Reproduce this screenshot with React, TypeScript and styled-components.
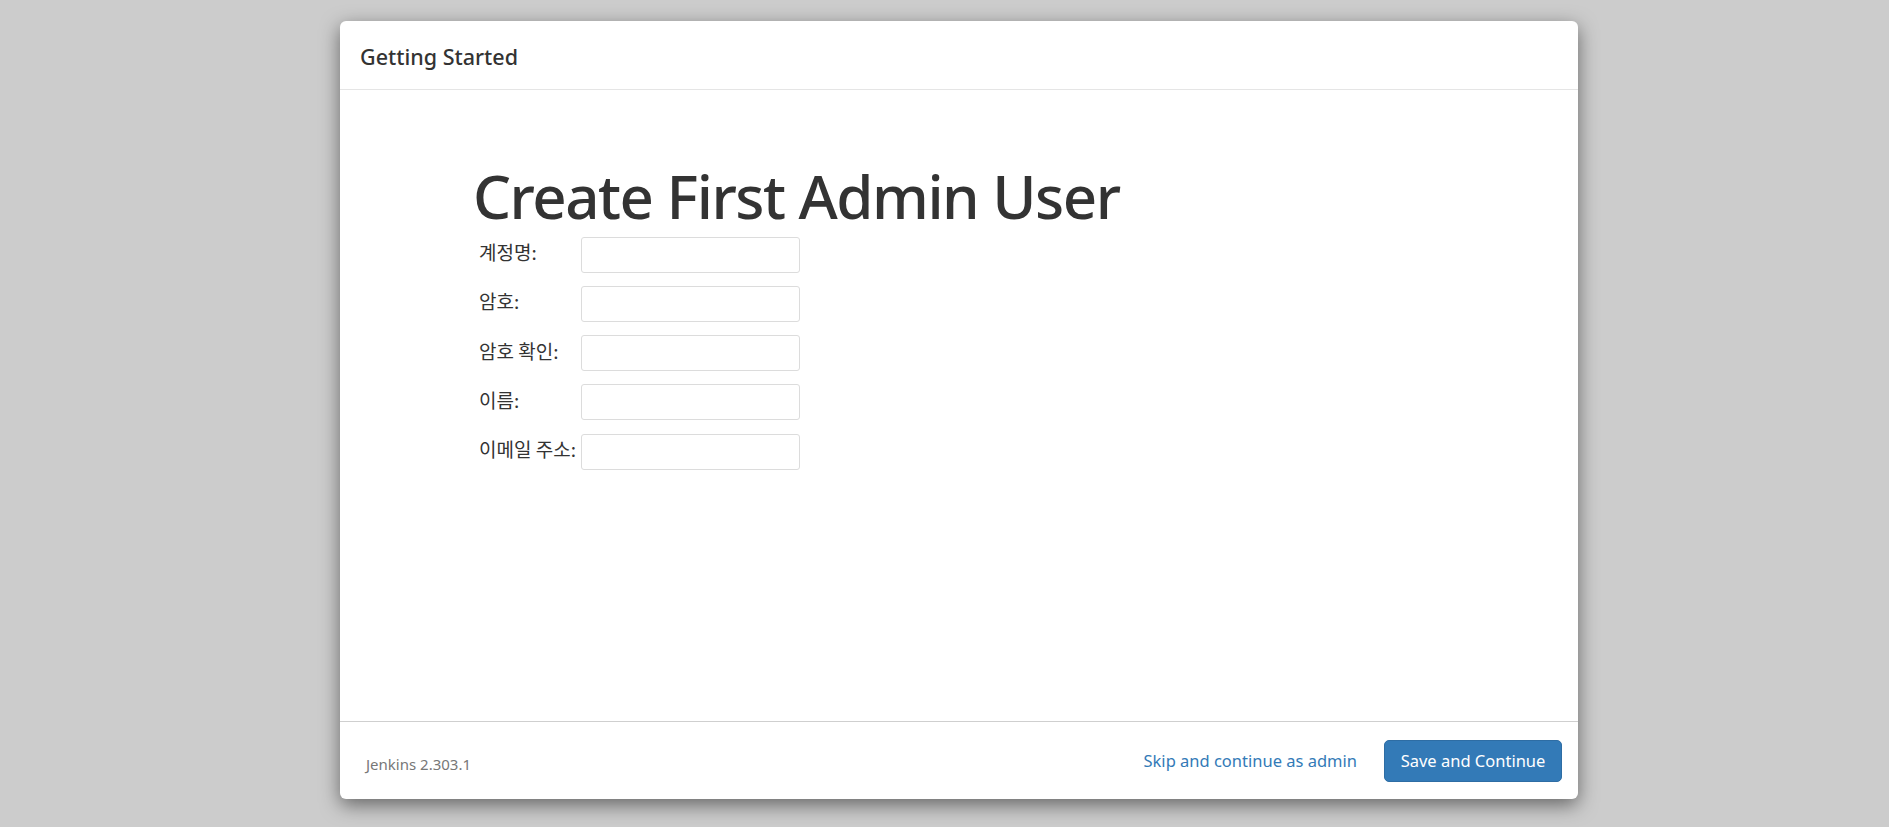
import React from 'react';
import styled, { createGlobalStyle } from 'styled-components';

const GlobalStyle = createGlobalStyle`
  body {
    margin: 0;
    background: #cccccc;
    font-family: "Noto Sans", "Noto Sans CJK KR", sans-serif;
    color: #333333;
  }
`;

const Page = styled.div`
  min-height: 827px;
  padding: 21px 0 0 340px;
  box-sizing: border-box;
`;

const Dialog = styled.div`
  width: 1238px;
  height: 778px;
  background: #ffffff;
  border-radius: 6px;
  box-shadow: 0 6px 19px rgba(0, 0, 0, 0.5);
  display: flex;
  flex-direction: column;
  overflow: hidden;
`;

const Header = styled.div`
  height: 69px;
  box-sizing: border-box;
  border-bottom: 1px solid #e5e5e5;
  display: flex;
  align-items: center;
  padding: 3px 20px 0;
`;

const Title = styled.h4`
  margin: 0;
  font-size: 21.5px;
  font-weight: 500;
  line-height: 1.1;
  color: #333333;
`;

const Body = styled.div`
  flex: 1;
  padding: 73px 0 0 133px;
`;

const Heading = styled.h1`
  margin: 0;
  font-size: 60px;
  font-weight: 500;
  line-height: 66px;
  color: #333333;
  letter-spacing: -1.5px;
`;

const Form = styled.table`
  border-collapse: collapse;
  margin: 1px 0 0 6px;
`;

const Label = styled.td`
  font-family: "Noto Sans CJK KR", sans-serif;
  font-size: 19px;
  padding: 0 5px 6px 0;
  vertical-align: middle;
  height: 49.25px;
  box-sizing: border-box;
  white-space: nowrap;
  color: #333333;
`;

const Cell = styled.td`
  padding: 0;
  vertical-align: middle;
`;

const Field = styled.input`
  width: 219px;
  height: 36px;
  box-sizing: border-box;
  border: 1px solid #dcdcdc;
  border-radius: 3px;
  outline: none;
  padding: 0 8px;
  font-size: 17px;
  display: block;
`;

const Footer = styled.div`
  height: 78px;
  box-sizing: border-box;
  border-top: 1px solid #cfcfcf;
  display: flex;
  align-items: center;
  padding: 0 16px 0 26px;
`;

const Version = styled.span`
  font-size: 15px;
  color: #777777;
  flex: 1;
  padding-top: 6px;
`;

const SkipLink = styled.a`
  font-size: 16.5px;
  color: #337ab7;
  text-decoration: none;
  margin-right: 27px;
  cursor: pointer;
`;

const PrimaryButton = styled.button`
  height: 42px;
  width: 178px;
  background: #337ab7;
  border: 1px solid #2e6da4;
  border-radius: 5px;
  color: #ffffff;
  font-family: "Noto Sans", sans-serif;
  font-size: 16.5px;
  cursor: pointer;
`;

const fields = ['계정명:', '암호:', '암호 확인:', '이름:', '이메일 주소:'];

const App = () => {
  return (
    <>
      <GlobalStyle />
      <Page>
        <Dialog>
          <Header>
            <Title>Getting Started</Title>
          </Header>
          <Body>
            <Heading>Create First Admin User</Heading>
            <Form>
              <tbody>
                {fields.map((label) => (
                  <tr key={label}>
                    <Label>{label}</Label>
                    <Cell>
                      <Field type={label.startsWith('암호') ? 'password' : 'text'} />
                    </Cell>
                  </tr>
                ))}
              </tbody>
            </Form>
          </Body>
          <Footer>
            <Version>Jenkins 2.303.1</Version>
            <SkipLink>Skip and continue as admin</SkipLink>
            <PrimaryButton>Save and Continue</PrimaryButton>
          </Footer>
        </Dialog>
      </Page>
    </>
  );
};

export default App;
